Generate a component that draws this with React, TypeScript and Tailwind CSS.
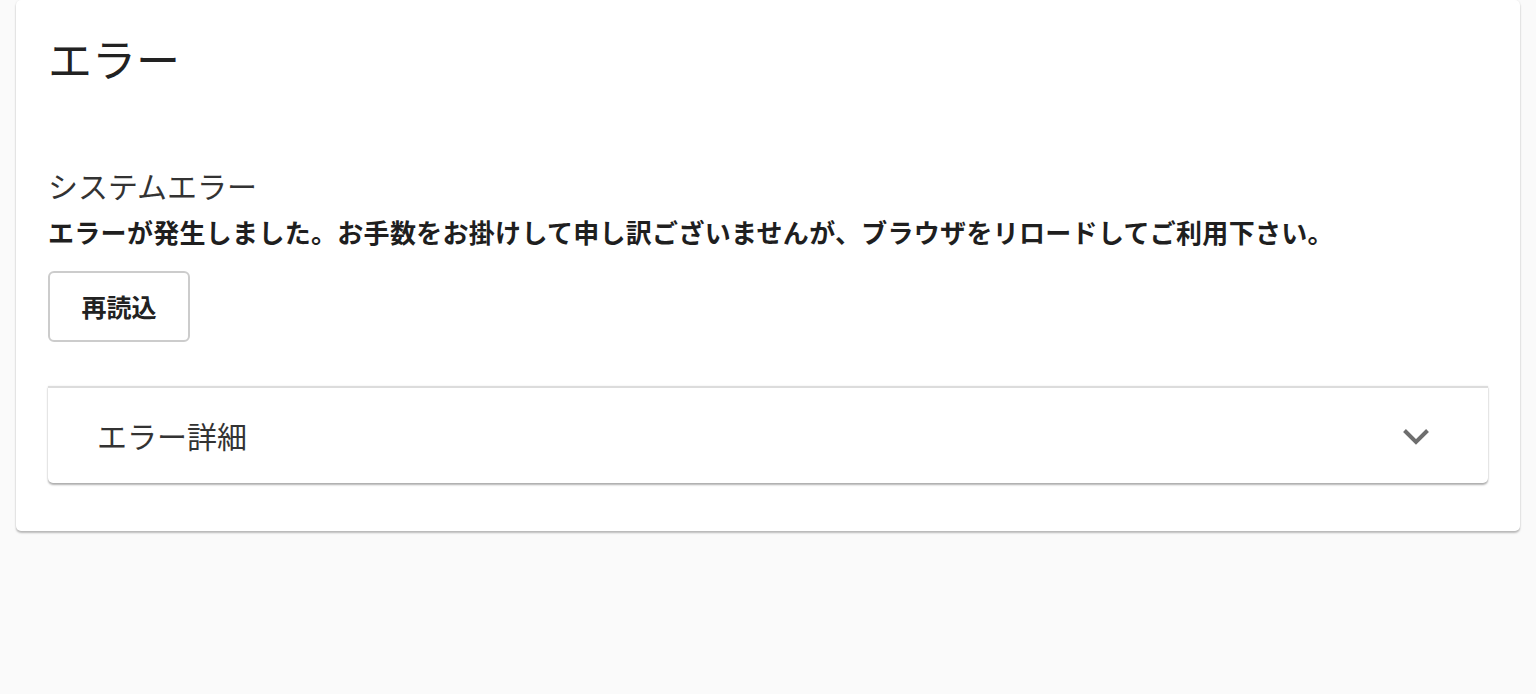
const ChevronDown = () => (
  <svg viewBox="0 0 28 20" width={28} height={20} fill="none">
    <path d="M2.5 4.5 14 16 25.5 4.5" stroke="#6e6e6e" strokeWidth={4} />
  </svg>
);

export default function App() {
  return (
    <div
      className="min-h-[694px] bg-[#fafafa] px-4"
      style={{ fontFamily: '"Noto Sans CJK JP", "Noto Sans", sans-serif' }}
    >
      <div className="rounded-[5px] bg-white px-8 pt-8 pb-12 shadow-[0_2px_2px_rgba(0,0,0,0.25),0_0_2px_rgba(0,0,0,0.08)]">
        <h1 className="text-[44px] leading-[52px] text-[#222]">エラー</h1>

        <div className="mt-[81px] text-[30px] leading-[40px] text-[#333]">
          システムエラー
        </div>
        <p className="mt-[6px] text-[26px] leading-[42px] font-bold text-[#1f1f1f] tracking-[0.3px]">
          エラーが発生しました。お手数をお掛けして申し訳ございませんが、ブラウザをリロードしてご利用下さい。
        </p>

        <button className="mt-[18px] flex h-[71px] w-[142px] items-center justify-center rounded-[6px] border-2 border-[#cccccc] bg-white text-[25px] font-bold text-[#222]">
          再読込
        </button>

        <div className="mt-[44px] rounded-b-[5px] border-t-2 border-[#dcdcdc] bg-white shadow-[0_2px_2px_rgba(0,0,0,0.3),0_0_2px_rgba(0,0,0,0.1)]">
          <div className="flex h-[95px] items-center justify-between pl-[49px] pr-[58px]">
            <span className="text-[30px] text-[#333]">エラー詳細</span>
            <ChevronDown />
          </div>
        </div>
      </div>
    </div>
  );
}
